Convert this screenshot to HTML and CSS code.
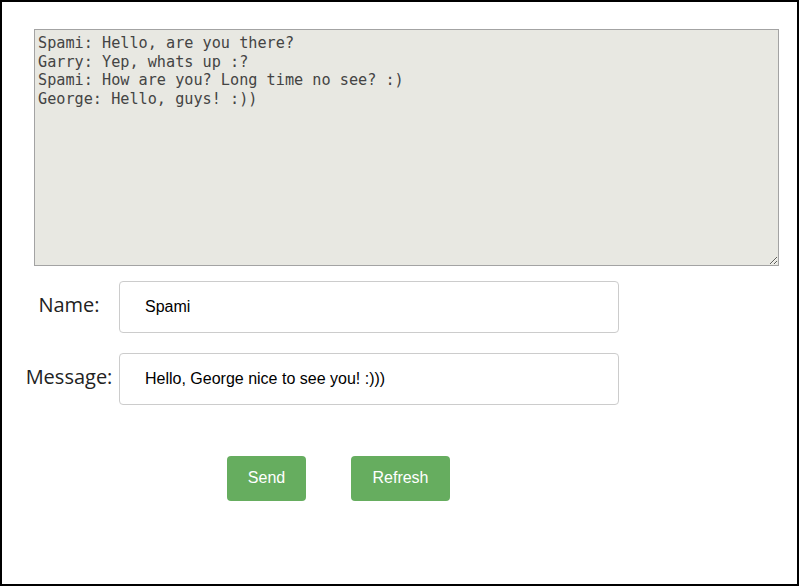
FILE: index.html
```html
<!DOCTYPE html>
<html>
<head>
<meta charset="utf-8">
<link rel="stylesheet" href="styles.css">
</head>
<body>
<div class="frame">
  <textarea class="log">Spami: Hello, are you there?
Garry: Yep, whats up :?
Spami: How are you? Long time no see? :)
George: Hello, guys! :))</textarea>
  <div class="form">
    <label class="lbl">Name:</label>
    <input class="field" type="text" value="Spami">
    <label class="lbl">Message:</label>
    <input class="field" type="text" value="Hello, George nice to see you! :)))">
  </div>
  <div class="actions">
    <button class="btn btn-send">Send</button>
    <button class="btn btn-refresh">Refresh</button>
  </div>
</div>
</body>
</html>
```
FILE: styles.css
```css
html, body {
  margin: 0;
  padding: 0;
  background: #fff;
}
.frame {
  box-sizing: border-box;
  width: 799px;
  height: 586px;
  border: 2px solid #000;
  padding: 27px 0 0 32px;
}
.log {
  display: block;
  box-sizing: border-box;
  width: 745px;
  height: 237px;
  margin: 0;
  padding: 4px 3px;
  border: 1px solid #a3a3a3;
  background: #e8e8e2;
  color: #444;
  font-family: "DejaVu Sans Mono", monospace;
  font-size: 15.2px;
  line-height: 18.6px;
  resize: both;
  outline: none;
}
.form {
  display: grid;
  grid-template-columns: 98px 500px;
  column-gap: 1px;
  row-gap: 20px;
  margin: 15px 0 0 -14px;
  align-items: center;
}
.lbl {
  text-align: center;
  font-family: "Open Sans", sans-serif;
  font-size: 20px;
  line-height: 24px;
  padding-bottom: 5px;
  color: #222;
}
.field {
  box-sizing: border-box;
  width: 500px;
  height: 52px;
  margin: 0;
  padding: 0 25px;
  border: 1px solid #ccc;
  border-radius: 4px;
  font-family: "Liberation Sans", Arial, sans-serif;
  font-size: 16px;
  color: #000;
  outline: none;
}
.actions {
  display: flex;
  gap: 45px;
  margin: 51px 0 0 193px;
}
.btn {
  height: 45px;
  border: none;
  border-radius: 4px;
  background: #66ad5f;
  color: #fff;
  font-family: "Liberation Sans", Arial, sans-serif;
  font-size: 16px;
  padding: 0 0 2px;
}
.btn-send { width: 79px; }
.btn-refresh { width: 99px; }
```
